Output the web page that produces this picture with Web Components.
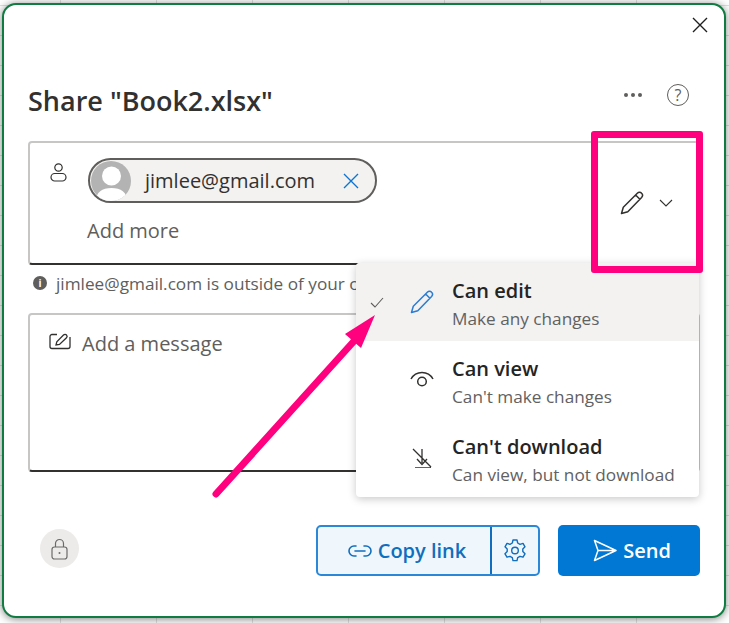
<!DOCTYPE html>
<html>
<head>
<meta charset="utf-8">
<style>
  html, body { margin: 0; height: 100%; }
  body {
    width: 729px; height: 623px; overflow: hidden; position: relative;
    font-family: "Open Sans", "Noto Sans", sans-serif;
    background-color: #fff;
    background-image:
      linear-gradient(#e0e0e0 1px, transparent 1px),
      linear-gradient(90deg, #e0e0e0 1px, transparent 1px);
    background-size: 96px 30px;
    background-position: 60px 5px;
  }
  share-dialog { margin: 3px 0 0 2px; }
</style>
</head>
<body>
<share-dialog></share-dialog>

<script>
const ICONS = {
  close: `<path d="M1 1l14 14M15 1L1 15" fill="none" stroke="currentColor" stroke-width="1.4"/>`,
  person: `<circle cx="8.500" cy="4.500" r="3.700" fill="none" stroke="currentColor" stroke-width="1.200"/><rect x="1" y="10.500" width="15" height="7.500" rx="3.700" fill="none" stroke="currentColor" stroke-width="1.200"/>`,
  pencil: `<path d="M1.500 22.500l1.800-6.300L17.300 2.200c1.300-1.300 3.200-1.200 4.300 0 1.100 1.100 1.100 3 0 4.200L7.800 20.700z M15.600 4l4.300 4.300" fill="none" stroke="currentColor" stroke-width="1.500" stroke-linejoin="round"/>`,
  chevron: `<path d="M1 1l6 6 6-6" fill="none" stroke="currentColor" stroke-width="1.100"/>`,
  compose: `<path d="M8 1.500H3a2 2 0 0 0-2 2v10a2 2 0 0 0 2 2h16a2 2 0 0 0 2-2V4" fill="none" stroke="currentColor" stroke-width="1.300"/><path d="M7 12l.8-3.200L14.500 2c.9-.9 2.200-.9 3 0s.8 2 0 2.800L10.500 11.500z" fill="none" stroke="currentColor" stroke-width="1.300"/>`,
  eye: `<path d="M1 11C3.500 6.500 7 4.500 12 4.500S20.500 6.500 23 11" fill="none" stroke="currentColor" stroke-width="1.500"/><circle cx="12" cy="13.500" r="4.300" fill="none" stroke="currentColor" stroke-width="1.500"/>`,
  nodownload: `<path d="M1 1l18 18M10 1v14M5 11l5 5.500 5-5.500M3 20h16" fill="none" stroke="currentColor" stroke-width="1.300"/>`,
  check: `<path d="M1 6l4 4 8-9" fill="none" stroke="currentColor" stroke-width="1.100"/>`,
  lock: `<path d="M4.500 9V5.500a4 4 0 0 1 8 0V9" fill="none" stroke="currentColor" stroke-width="1.200"/><rect x="1" y="9" width="15" height="12" rx="2.500" fill="none" stroke="currentColor" stroke-width="1.200"/><circle cx="8.500" cy="15" r="1" fill="currentColor"/>`,
  link: `<path d="M8 2H6a5 5 0 0 0 0 10h2M16 2h2a5 5 0 0 1 0 10h-2M7 7h10" fill="none" stroke="currentColor" stroke-width="1.600" stroke-linecap="round"/>`,
  gear: `<path d="M9 1h4l.7 3 2.300 1.300 3-.9 2 3.400-2.200 2.200v2.600L21 14.800l-2 3.400-3-.9-2.300 1.300-.7 3H9l-.7-3L6 17.300l-3 .9-2-3.400 2.200-2.200V10L1 7.800l2-3.400 3 .9L8.300 4z" fill="none" stroke="currentColor" stroke-width="1.400" stroke-linejoin="round"/><circle cx="11" cy="11.500" r="3.300" fill="none" stroke="currentColor" stroke-width="1.400"/>`,
  send: `<path d="M1.500 1.500L23 11.500 1.500 21.500 5 11.500zM5 11.500H23" fill="none" stroke="currentColor" stroke-width="1.500" stroke-linejoin="round"/>`,
};

// Small icon wrapper: <ui-icon name="pencil" w="24" h="24">
class UiIcon extends HTMLElement {
  connectedCallback() {
    if(!this.shadowRoot) {
      let w = this.getAttribute("w") || 16;
      let h = this.getAttribute("h") || w;
      this.attachShadow({ mode: "open" });
      this.shadowRoot.innerHTML = `
      <style>
        :host { display: inline-flex; flex: none; line-height: 0; }
      </style>
      <svg width="${w}" height="${h}" viewBox="0 0 ${w} ${h}">${ICONS[this.getAttribute("name")]}</svg>
      `;
    }
  }
}
customElements.define("ui-icon", UiIcon);

class PersonChip extends HTMLElement {
  connectedCallback() {
    if(!this.shadowRoot) {
      this.attachShadow({ mode: "open" });
      this.shadowRoot.innerHTML = `
      <style>
        :host {
          display: inline-flex; align-items: center; box-sizing: border-box;
          width: 289px; height: 45px; border: 2px solid #605e5c; border-radius: 23px;
          background: #f3f2f1; padding-left: 1px; color: #323130; font-size: 20px;
        }
        .avatar { width: 40px; height: 40px; border-radius: 50%; overflow: hidden; background: #b3b3b3; flex: none; }
        .text { margin-left: 14px; flex: 1; }
        ui-icon { color: #0f74cf; margin-right: 16px; }
      </style>
      <div class="avatar">
        <svg width="40" height="40" viewBox="0 0 40 40">
          <circle cx="20.500" cy="15" r="9.500" fill="#fff"/>
          <path d="M5 40c0-9 6-13 15.500-13S36 31 36 40z" fill="#fff"/>
        </svg>
      </div>
      <span class="text"><slot></slot></span>
      <ui-icon name="close" w="16"></ui-icon>
      `;
    }
  }
}
customElements.define("person-chip", PersonChip);

class PermissionMenu extends HTMLElement {
  connectedCallback() {
    if(!this.shadowRoot) {
      this.attachShadow({ mode: "open" });
      this.shadowRoot.innerHTML = `
      <style>
        :host {
          display: block; position: absolute; left: 352px; top: 258px; width: 343px;
          background: #fff; border-radius: 4px; overflow: hidden;
          box-shadow: 0 2px 8px rgba(0,0,0,.22);
        }
      </style>
      <slot></slot>
      `;
    }
  }
}
customElements.define("permission-menu", PermissionMenu);

class PermissionItem extends HTMLElement {
  connectedCallback() {
    if(!this.shadowRoot) {
      let title = this.getAttribute("title-text");
      let sub = this.getAttribute("sub");
      this.attachShadow({ mode: "open" });
      this.shadowRoot.innerHTML = `
      <style>
        :host {
          display: grid; grid-template-columns: 54px 42px 1fr; align-items: center;
          height: 78px; box-sizing: border-box;
        }
        :host([selected]) { background: #f3f2f1; }
        .check { display: flex; justify-content: flex-end; padding-right: 26px; color: #605e5c; }
        .icon { display: flex; align-items: center; justify-content: flex-start; color: #323130; }
        .text { padding-top: 7px; }
        .title { font-size: 20px; line-height: 26px; font-weight: 600; color: #242424; }
        .sub { font-size: 17.200px; line-height: 28px; margin-top: 1px; color: #616161; white-space: nowrap; }
      </style>
      <div class="check"><slot name="check"></slot></div>
      <div class="icon"><slot name="icon"></slot></div>
      <div class="text">
        <div class="title">${title}</div>
        <div class="sub">${sub}</div>
      </div>
      `;
    }
  }
}
customElements.define("permission-item", PermissionItem);

class ShareDialog extends HTMLElement {
  connectedCallback() {
    if(!this.shadowRoot) {
      this.attachShadow({ mode: "open" });
      this.shadowRoot.innerHTML = `
      <style>
        :host {
          display: block; position: relative; box-sizing: border-box;
          width: 724px; height: 615px; background: #fff;
          border: 2px solid #107c41; border-radius: 14px;
          box-shadow: 0 1px 8px rgba(0,0,0,.5);
          color: #323130; padding: 0 24px 0 24px;
        }
        .top { display: flex; justify-content: flex-end; height: 46px; padding: 12px 0 0; box-sizing: border-box; margin-right: -8px; }
        .top ui-icon { color: #1f1f1f; }
        .head { display: flex; align-items: center; margin-top: 26px; height: 46px; }
        h1 { margin: 0; flex: 1; font-size: 27px; font-weight: 600; color: #323130; }
        .dots { display: flex; gap: 3px; margin: 0 25px 10px 0; }
        .dots i { width: 4px; height: 4px; border-radius: 50%; background: #605e5c; }
        .help {
          width: 20px; height: 20px; border: 1.500px solid #605e5c; border-radius: 50%;
          color: #605e5c; font-size: 16px; display: flex; align-items: center; justify-content: center;
          margin: 0 11px 10px 0;
        }
        .to {
          display: flex; box-sizing: border-box; height: 124px; margin-top: 18px;
          border: 2px solid #c8c6c4; border-bottom-color: #323130; border-radius: 4px;
          padding: 15px 0 0 20px;
        }
        .to-body { margin-left: 21px; flex: 1; }
        .add { margin-top: 11px; font-size: 20px; color: #605e5c; margin-left: -1px; }
        .perm { display: flex; align-items: center; gap: 15px; color: #323130; margin: 33px 25px 0 0; align-self: flex-start; }
        .notice { display: flex; align-items: center; gap: 9px; height: 36px; padding-left: 5px; font-size: 17.200px; color: #605e5c; white-space: nowrap; overflow: hidden; }
        .dot-i {
          width: 14px; height: 14px; border-radius: 50%; background: #605e5c; color: #fff; flex: none;
          font-size: 10px; font-weight: 700; display: flex; align-items: center; justify-content: center;
        }
        .msg {
          display: flex; gap: 11px; box-sizing: border-box; height: 159px; margin-top: 12px;
          border: 2px solid #c8c6c4; border-bottom-color: #323130; border-radius: 4px;
          padding: 15px 19px; font-size: 20px; color: #605e5c;
        }
        .msg ui-icon { color: #323130; margin-top: 3px; }
        .foot { display: flex; align-items: center; margin-top: 53px; }
        .lock {
          width: 39px; height: 39px; border-radius: 50%; background: #edebe9; color: #6b6b6b;
          margin: 0 0 4px 12px; display: flex; align-items: center; justify-content: center;
        }
        .copy {
          margin-left: auto; display: flex; box-sizing: border-box; width: 224px; height: 51px;
          border: 2px solid #2b88d8; border-radius: 5px; background: #eff6fc; color: #106ebe;
          font-size: 20px; font-weight: 600;
        }
        .copy .main { flex: 1; display: flex; align-items: center; justify-content: center; gap: 6px; padding-left: 6px; border-right: 2px solid #106ebe; }
        .copy .cog { width: 46px; display: flex; align-items: center; justify-content: center; }
        .send {
          margin-left: 18px; display: flex; align-items: center; justify-content: center; gap: 6px;
          box-sizing: border-box; width: 142px; height: 51px; border-radius: 5px; padding-left: 6px;
          background: #0078d4; color: #fff; font-size: 20px; font-weight: 600;
        }
      </style>

      <div class="top"><ui-icon name="close" w="16"></ui-icon></div>
      <div class="head">
        <h1>Share "Book2.xlsx"</h1>
        <div class="dots"><i></i><i></i><i></i></div>
        <div class="help">?</div>
      </div>
      <div class="to">
        <ui-icon name="person" w="17" h="19" style="color:#323130;margin-top:5px"></ui-icon>
        <div class="to-body">
          <person-chip>jimlee@gmail.com</person-chip>
          <div class="add">Add more</div>
        </div>
        <div class="perm">
          <ui-icon name="pencil" w="24"></ui-icon>
          <ui-icon name="chevron" w="14" h="8"></ui-icon>
        </div>
      </div>
      <div class="notice"><span class="dot-i">i</span><span>jimlee@gmail.com is outside of your organization</span></div>
      <div class="msg"><ui-icon name="compose" w="22" h="17"></ui-icon>Add a message</div>
      <div class="foot">
        <div class="lock"><ui-icon name="lock" w="17" h="22"></ui-icon></div>
        <div class="copy">
          <div class="main"><ui-icon name="link" w="24" h="14"></ui-icon>Copy link</div>
          <div class="cog"><ui-icon name="gear" w="22" h="23"></ui-icon></div>
        </div>
        <div class="send"><ui-icon name="send" w="24" h="23"></ui-icon>Send</div>
      </div>

      <slot></slot>
      `;
    }
  }
}
customElements.define("share-dialog", ShareDialog);

// Pink callout drawn over the dialog
class CallOut extends HTMLElement {
  connectedCallback() {
    if(!this.shadowRoot) {
      this.attachShadow({ mode: "open" });
      this.shadowRoot.innerHTML = `
      <style>
        :host { display: block; position: absolute; left: 0; top: 0; width: 729px; height: 623px; pointer-events: none; }
        .box {
          position: absolute; left: 591px; top: 131px; width: 112px; height: 142px; box-sizing: border-box;
          border: 7px solid #ff007f; border-radius: 3px;
        }
        svg { position: absolute; left: 0; top: 0; }
      </style>
      <div class="box"></div>
      <svg width="729" height="623">
        <path d="M216 494L355 340" stroke="#ff007f" stroke-width="7" stroke-linecap="round" fill="none"/>
        <path d="M375 315L361 348 345 334z" fill="#ff007f"/>
      </svg>
      `;
    }
  }
}
customElements.define("call-out", CallOut);

const dialog = document.querySelector("share-dialog");
dialog.innerHTML = `
  <permission-menu>
    <permission-item selected title-text="Can edit" sub="Make any changes">
      <ui-icon slot="check" name="check" w="14" h="11"></ui-icon>
      <ui-icon slot="icon" name="pencil" w="24" style="color:#2b7cd3"></ui-icon>
    </permission-item>
    <permission-item title-text="Can view" sub="Can't make changes">
      <ui-icon slot="icon" name="eye" w="24"></ui-icon>
    </permission-item>
    <permission-item title-text="Can't download" sub="Can view, but not download">
      <ui-icon slot="icon" name="nodownload" w="20" style="margin-left:2px"></ui-icon>
    </permission-item>
  </permission-menu>
`;
document.body.appendChild(document.createElement("call-out"));
</script>
</body>
</html>
